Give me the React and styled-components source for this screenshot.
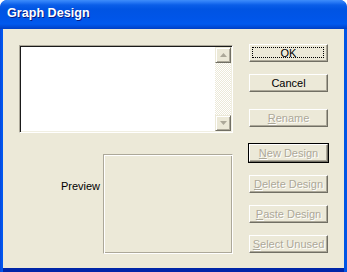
import React from "react";
import styled, { createGlobalStyle } from "styled-components";

const Global = createGlobalStyle`
  html, body {
    margin: 0;
    padding: 0;
    background: #fff;
  }
  body {
    font-family: "Liberation Sans", Arial, sans-serif;
  }
`;

const Window = styled.div`
  width: 347px;
  height: 272px;
  display: flex;
  flex-direction: column;
  background: linear-gradient(90deg, #0a46d8 0px, #0058f0 2px, #0055e5 100%);
  border-radius: 7px 7px 0 0;
  overflow: hidden;
`;

const TitleBar = styled.div`
  height: 29px;
  flex: none;
  display: flex;
  align-items: center;
  padding: 0 0 3px 7px;
  box-sizing: border-box;
  background: linear-gradient(
    180deg,
    #3e8dfa 0px,
    #2a7bf6 2px,
    #0a5ee8 5px,
    #0054e3 9px,
    #0055e8 18px,
    #0059ee 24px,
    #004ad6 27px,
    #003fc4 29px
  );
  border-radius: 7px 7px 0 0;
`;

const Title = styled.span`
  color: #fff;
  font-family: "Liberation Sans", Arial, sans-serif;
  font-weight: bold;
  font-size: 12.6px;
  text-shadow: 1px 1px #0a1a80;
`;

const Client = styled.div`
  flex: 1;
  margin: 0 3px 4px;
  background: #ece9d8;
  display: grid;
  grid-template-columns: 214px 79px;
  column-gap: 16px;
  padding: 0 16px;
  box-shadow: 0 4px 0 #0026a8;
`;

const LeftCol = styled.div`
  display: flex;
  flex-direction: column;
  padding-top: 16px;
`;

const ListBox = styled.div`
  box-sizing: border-box;
  height: 88px;
  display: flex;
  border: 1px solid;
  border-color: #aca899 #fff #fff #aca899;
  box-shadow: inset 1px 1px #1a1a1a, inset -1px -1px #f1efe2;
  padding: 1px;
  background: #fff;
`;

const ListArea = styled.div`
  flex: 1;
  background: #fff;
`;

const ScrollBar = styled.div`
  width: 16px;
  display: flex;
  flex-direction: column;
  background-color: #fff;
  background-image: conic-gradient(#ece9d8 25%, #fff 0 50%, #ece9d8 0 75%, #fff 0);
  background-size: 2px 2px;
`;

const ScrollBtn = styled.div`
  box-sizing: border-box;
  width: 16px;
  height: 16px;
  display: flex;
  align-items: center;
  justify-content: center;
  background: #ece9d8;
  border: 1px solid;
  border-color: #ece9d8 #716f64 #716f64 #ece9d8;
  box-shadow: inset 1px 1px #fff, inset -1px -1px #aca899;
`;

const Track = styled.div`
  flex: 1;
`;

const PreviewRow = styled.div`
  display: flex;
  justify-content: flex-end;
  margin-top: 21px;
`;

const PreviewLabel = styled.span`
  font-size: 11px;
  color: #000;
  padding-top: 26px;
  margin-right: 3px;
`;

const PreviewBox = styled.div`
  box-sizing: border-box;
  width: 130px;
  height: 100px;
  border: 1px solid;
  border-color: #aca899 #fff #fff #aca899;
  box-shadow: inset 1px 1px #fff, inset -1px -1px #aca899;
`;

const RightCol = styled.div`
  display: flex;
  flex-direction: column;
  padding-top: 15px;
`;

const Button = styled.div`
  position: relative;
  box-sizing: border-box;
  height: 18px;
  margin-top: ${(p) => p.$gap || 0}px;
  display: flex;
  align-items: center;
  justify-content: center;
  background: #ece9d8;
  font-size: 11px;
  color: ${(p) => (p.$disabled ? "#aca899" : "#000")};
  text-shadow: ${(p) => (p.$disabled ? "1px 1px #fff" : "none")};
  border: 1px solid;
  border-color: #fff #716f64 #716f64 #fff;
  box-shadow: inset -1px -1px #aca899
    ${(p) => (p.$default ? ", 0 0 0 1px #000" : "")};

  &::after {
    content: "";
    display: ${(p) => (p.$focus ? "block" : "none")};
    position: absolute;
    inset: 2px 3px 3px 2px;
    border: 1px dotted #000;
  }

  u {
    text-decoration-thickness: 1px;
    text-underline-offset: 1px;
  }
`;

const Arrow = ({ down }) => (
  <svg width="7" height="5" viewBox="0 0 7 5">
    <polygon
      points={down ? "0,0 7,0 3.5,4" : "0,4 7,4 3.5,0"}
      fill="#aca899"
    />
  </svg>
);

export default function App() {
  return (
    <>
      <Global />
      <Window>
        <TitleBar>
          <Title>Graph Design</Title>
        </TitleBar>
        <Client>
          <LeftCol>
            <ListBox>
              <ListArea />
              <ScrollBar>
                <ScrollBtn>
                  <Arrow />
                </ScrollBtn>
                <Track />
                <ScrollBtn>
                  <Arrow down />
                </ScrollBtn>
              </ScrollBar>
            </ListBox>
            <PreviewRow>
              <PreviewLabel>Preview</PreviewLabel>
              <PreviewBox />
            </PreviewRow>
          </LeftCol>
          <RightCol>
            <Button $focus>OK</Button>
            <Button $gap={12}>Cancel</Button>
            <Button $gap={17} $disabled>
              <span>
                <u>R</u>ename
              </span>
            </Button>
            <Button $gap={17} $disabled $default>
              <span>
                <u>N</u>ew Design
              </span>
            </Button>
            <Button $gap={13} $disabled>
              <span>
                <u>D</u>elete Design
              </span>
            </Button>
            <Button $gap={12} $disabled>
              <span>
                <u>P</u>aste Design
              </span>
            </Button>
            <Button $gap={12} $disabled>
              <span>
                <u>S</u>elect Unused
              </span>
            </Button>
          </RightCol>
        </Client>
      </Window>
    </>
  );
}
